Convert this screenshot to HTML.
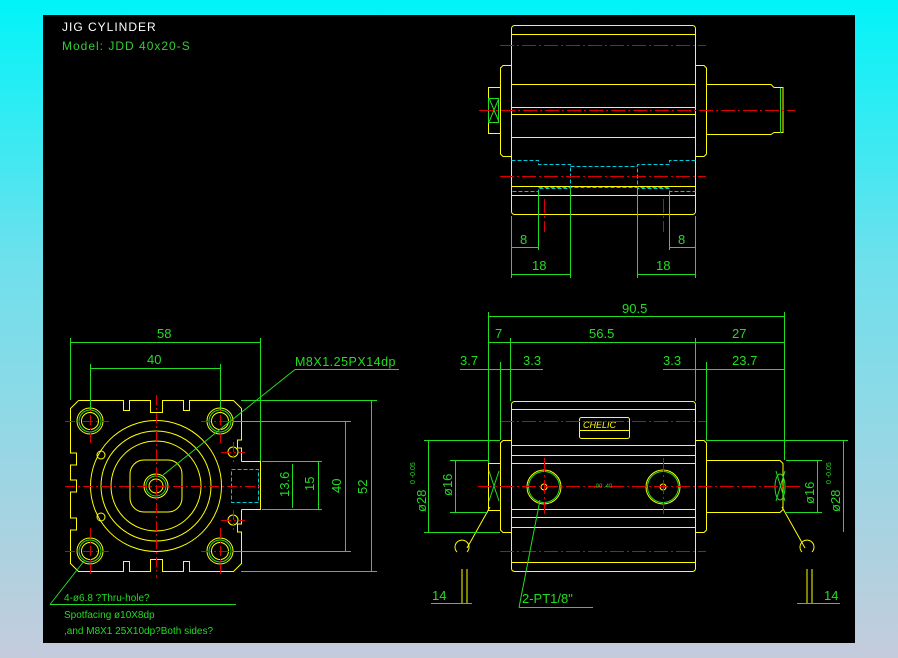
<!DOCTYPE html>
<html><head><style>
html,body{margin:0;padding:0;width:898px;height:658px;overflow:hidden;background:linear-gradient(#00f4f8,#6fe0ec 40%,#c4ccdc);}
svg{position:absolute;left:0;top:0}
text{font-family:"Liberation Sans",sans-serif;}
</style></head><body>
<svg width="898" height="658" viewBox="0 0 898 658" xmlns="http://www.w3.org/2000/svg">
<rect x="43" y="15" width="812" height="628" fill="#000"/>
<text x="62" y="31" fill="#fff" font-size="12" letter-spacing="1">JIG CYLINDER</text>
<text x="62" y="50" fill="#33cc33" font-size="12" letter-spacing="1">Model: JDD 40x20-S</text>

<g fill="none" stroke-width="1">
<!-- TOP VIEW -->
<g stroke="#ffff00">
<rect x="511.5" y="25.5" width="184" height="189" rx="3"/>
<line x1="511.5" y1="34.5" x2="695.5" y2="34.5"/>
<line x1="511.5" y1="84.5" x2="695.5" y2="84.5"/>
<line x1="511.5" y1="107.5" x2="695.5" y2="107.5"/>
<line x1="511.5" y1="114.5" x2="695.5" y2="114.5"/>
<line x1="511.5" y1="137.5" x2="695.5" y2="137.5"/>
<line x1="511.5" y1="186.5" x2="695.5" y2="186.5"/>
<line x1="511.5" y1="195.5" x2="695.5" y2="195.5"/>
<path d="M511.5 65.5H503l-2.5 2.5v86l2.5 2.5h8.5"/>
<path d="M695.5 65.5H704l2.5 2.5v86l-2.5 2.5h-8.5"/>
<path d="M706.5 84.5H771l3 3h9v45h-9l-3 2h-64.5"/>
<rect x="488.5" y="87.5" width="12" height="46"/>
</g>
<g stroke="#22dd22">
<rect x="488.5" y="98.5" width="10" height="24"/>
<path d="M489 98l10 24M499 98l-10 24"/>
<line x1="780.5" y1="88" x2="780.5" y2="133"/>
</g>
<g stroke="#00c8d8" stroke-dasharray="4,2">
<path d="M511.5 160.5H538.5V164.5H570.5V188.5H538.5V191.5H511.5"/>
<path d="M695.5 160.5H669.5V164.5H637.5V188.5H669.5V191.5H695.5"/>
<line x1="570.5" y1="166.5" x2="637.5" y2="166.5"/>
<line x1="538.5" y1="187.5" x2="669.5" y2="187.5"/>
</g>
<g stroke="#dd0000" stroke-dasharray="14,3,2,3">
<line x1="500" y1="45.5" x2="706" y2="45.5"/>
<line x1="479" y1="110.5" x2="795" y2="110.5"/>
<line x1="500" y1="176.5" x2="706" y2="176.5"/>
<line x1="544.5" y1="199" x2="544.5" y2="232"/>
<line x1="663.5" y1="199" x2="663.5" y2="232"/>
</g>
<g stroke="#22dd22">
<path d="M511.5 216v62M538.5 192v58M570.5 188v90M637.5 188v90M669.5 192v58M695.5 216v62"/>
<path d="M511.5 247.5h27M669.5 247.5h26M511.5 274.5h59M637.5 274.5h58"/>
</g>
<g fill="#22dd22" font-size="13">
<text x="520" y="244" stroke="none">8</text>
<text x="678" y="244" stroke="none">8</text>
<text x="532" y="270" stroke="none">18</text>
<text x="656" y="270" stroke="none">18</text>
</g>

<!-- FRONT VIEW -->
<g stroke="#ffff00">
<path d="M78.5 400.5H123.5v10h6v-10H150.5v12h12v-12H183.5v10h6v-10H233.5l8 8V440h-4v8h4v13.5"/>
<path d="M241.5 509.5V524h-4v8h4v31.5l-8 8H189.5v-10h-6v10H162.5v-12h-12v12H129.5v-10h-6v10H78.5l-8-8V530h6v-12h-6V492h6v-12h-6V465h6v-12h-6V408.5L78.5 400.5"/>
<circle cx="156" cy="486" r="65.5"/>
<circle cx="156" cy="486" r="55"/>
<circle cx="156" cy="486" r="45"/>
<rect x="130" y="460" width="52" height="52" rx="14"/>
<circle cx="156" cy="486" r="12"/>
<circle cx="156" cy="486" r="7"/>
<circle cx="101" cy="455" r="4"/>
<circle cx="101" cy="517" r="4"/>
<circle cx="90" cy="421" r="13"/><circle cx="90" cy="421" r="8.5"/>
<circle cx="220" cy="421" r="13"/><circle cx="220" cy="421" r="8.5"/>
<circle cx="90" cy="551" r="13"/><circle cx="90" cy="551" r="8.5"/>
<circle cx="220" cy="551" r="13"/><circle cx="220" cy="551" r="8.5"/>
<circle cx="233" cy="452" r="5"/>
<circle cx="233" cy="520" r="5"/>
<path d="M241.5 461.5H260.5V509.5H241.5"/>
</g>
<g stroke="#22dd22">
<circle cx="90" cy="421" r="11"/><circle cx="220" cy="421" r="11"/>
<circle cx="90" cy="551" r="11"/><circle cx="220" cy="551" r="11"/>
<circle cx="156" cy="486" r="10"/>
</g>
<rect x="231.5" y="469.5" width="27" height="33" stroke="#00c8d8" stroke-dasharray="4,2"/>
<g stroke="#dd0000" stroke-dasharray="10,3,2,3">
<line x1="65" y1="486.5" x2="260" y2="486.5"/>
<line x1="156.5" y1="395" x2="156.5" y2="578"/>
<path d="M65 421.5h44M201 421.5h42M65 551.5h44M201 551.5h42M90.5 397v46M220.5 397v46M90.5 528v48M220.5 528v48"/>
<path d="M221 452.5h24M233.5 442v20M221 520.5h24M233.5 510v20"/>
</g>
<g stroke="#22dd22">
<path d="M70.5 400v-62M260.5 461v-123M70.5 342.5h190M90.5 410v-46M220.5 410v-46M90.5 368.5h130"/>
<path d="M262 461.5h60M262 509.5h60M233 421.5h118M233 551.5h118M241 400.5h136M241 571.5h136"/>
<path d="M292.5 464v44M318.5 461v48M345.5 421v130M371.5 400v172"/>
<path d="M295 369.5h104M295 369.5L163 475"/>
<path d="M50 604.5h186M50 604.5L84 561"/>
</g>
<g fill="#22dd22" font-size="13">
<text x="157" y="338">58</text>
<text x="147" y="364">40</text>
<text x="295" y="366" font-size="12.5" letter-spacing="0.5">M8X1.25PX14dp</text>
<text transform="translate(289,497) rotate(-90)">13.6</text>
<text transform="translate(314,491) rotate(-90)">15</text>
<text transform="translate(341,493) rotate(-90)">40</text>
<text transform="translate(367,494) rotate(-90)">52</text>
<text x="64" y="601" font-size="10">4-ø6.8 ?Thru-hole?</text>
<text x="64" y="618" font-size="10">Spotfacing ø10X8dp</text>
<text x="64" y="634" font-size="10">,and M8X1 25X10dp?Both sides?</text>
</g>

<!-- SIDE VIEW -->
<g stroke="#ffff00">
<rect x="511.5" y="401.5" width="184" height="170" rx="3"/>
<path d="M511.5 409.5h184M511.5 445.5h184M511.5 455.5h184M511.5 463.5h184M511.5 509.5h184M511.5 517.5h184M511.5 527.5h184M511.5 562.5h184"/>
<path d="M511.5 440.5H503l-2.5 2.5v87l2.5 2.5h8.5"/>
<path d="M695.5 440.5H704l2.5 2.5v87l-2.5 2.5h-8.5"/>
<path d="M706.5 460.5H780l3 3v46l-3 3h-73.5"/>
<rect x="488.5" y="463.5" width="12" height="47"/>
<circle cx="544" cy="487" r="17"/><circle cx="663" cy="487" r="17"/>
<circle cx="544" cy="487" r="3"/><circle cx="663" cy="487" r="3"/>
<rect x="579.5" y="417.5" width="50" height="21" rx="2"/>
<line x1="579.5" y1="430.5" x2="629.5" y2="430.5"/>
<path d="M462 569v35M467 569v35M807 569v35M812 569v35"/>
<path d="M457 552a7 7 0 1 1 10 0M802 552a7 7 0 1 1 10 0"/>
<line x1="467" y1="548" x2="490" y2="507"/>
<line x1="805" y1="548" x2="782" y2="507"/>
</g>
<text x="583" y="428" fill="#ffff00" font-size="9" font-style="italic">CHELIC</text>
<g stroke="#22dd22">
<circle cx="544" cy="487" r="15.5"/><circle cx="663" cy="487" r="15.5"/>
<path d="M489 471l10 30M499 471l-10 30M776 471l9 30M785 471l-9 30"/>
<ellipse cx="780" cy="487" rx="5" ry="13"/>
</g>
<g stroke="#dd0000" stroke-dasharray="14,3,2,3">
<line x1="500" y1="421.5" x2="706" y2="421.5"/>
<line x1="500" y1="551.5" x2="706" y2="551.5"/>
<line x1="478" y1="486.5" x2="800" y2="486.5"/>
<line x1="544.5" y1="458" x2="544.5" y2="514"/>
<line x1="663.5" y1="458" x2="663.5" y2="514"/>
</g>
<g stroke="#22dd22">
<path d="M488.5 463V312M784.5 460V312M510.5 401V338M695.5 401V338M500.5 440V362M706.5 440V362"/>
<path d="M488.5 316.5h296M488.5 342.5h296M460 369.5h83M663 369.5h121"/>
<path d="M424 440.5h76M424 532.5h76M450 460.5h38M450 512.5h38M706 440.5h142M786 460.5h36M786 512.5h36"/>
<path d="M428.5 441v91M455.5 461v51M817.5 461v51M843.5 441v91"/>
<path d="M431 603.5h41M456 603.5h10M797 603.5h10M797 603.5h43"/>
<path d="M519 607.5h74M519 607.5L540 500"/>
</g>
<g fill="#22dd22" font-size="13">
<text x="622" y="313">90.5</text>
<text x="495" y="338">7</text>
<text x="589" y="338">56.5</text>
<text x="732" y="338">27</text>
<text x="460" y="365">3.7</text>
<text x="523" y="365">3.3</text>
<text x="663" y="365">3.3</text>
<text x="732" y="365">23.7</text>
<text transform="translate(452,496) rotate(-90)">ø16</text>
<text transform="translate(426,512) rotate(-90)">ø28</text>
<text transform="translate(415,484) rotate(-90)" font-size="7">0 -0.05</text>
<text transform="translate(814,504) rotate(-90)">ø16</text>
<text transform="translate(840,512) rotate(-90)">ø28</text>
<text transform="translate(831,484) rotate(-90)" font-size="7">0 -0.05</text>
<text x="432" y="600">14</text>
<text x="824" y="600">14</text>
<text x="522" y="603">2-PT1/8"</text>
<text x="594" y="488" font-size="6">.00 .40</text>
</g>
</g>
</svg>
</body></html>
